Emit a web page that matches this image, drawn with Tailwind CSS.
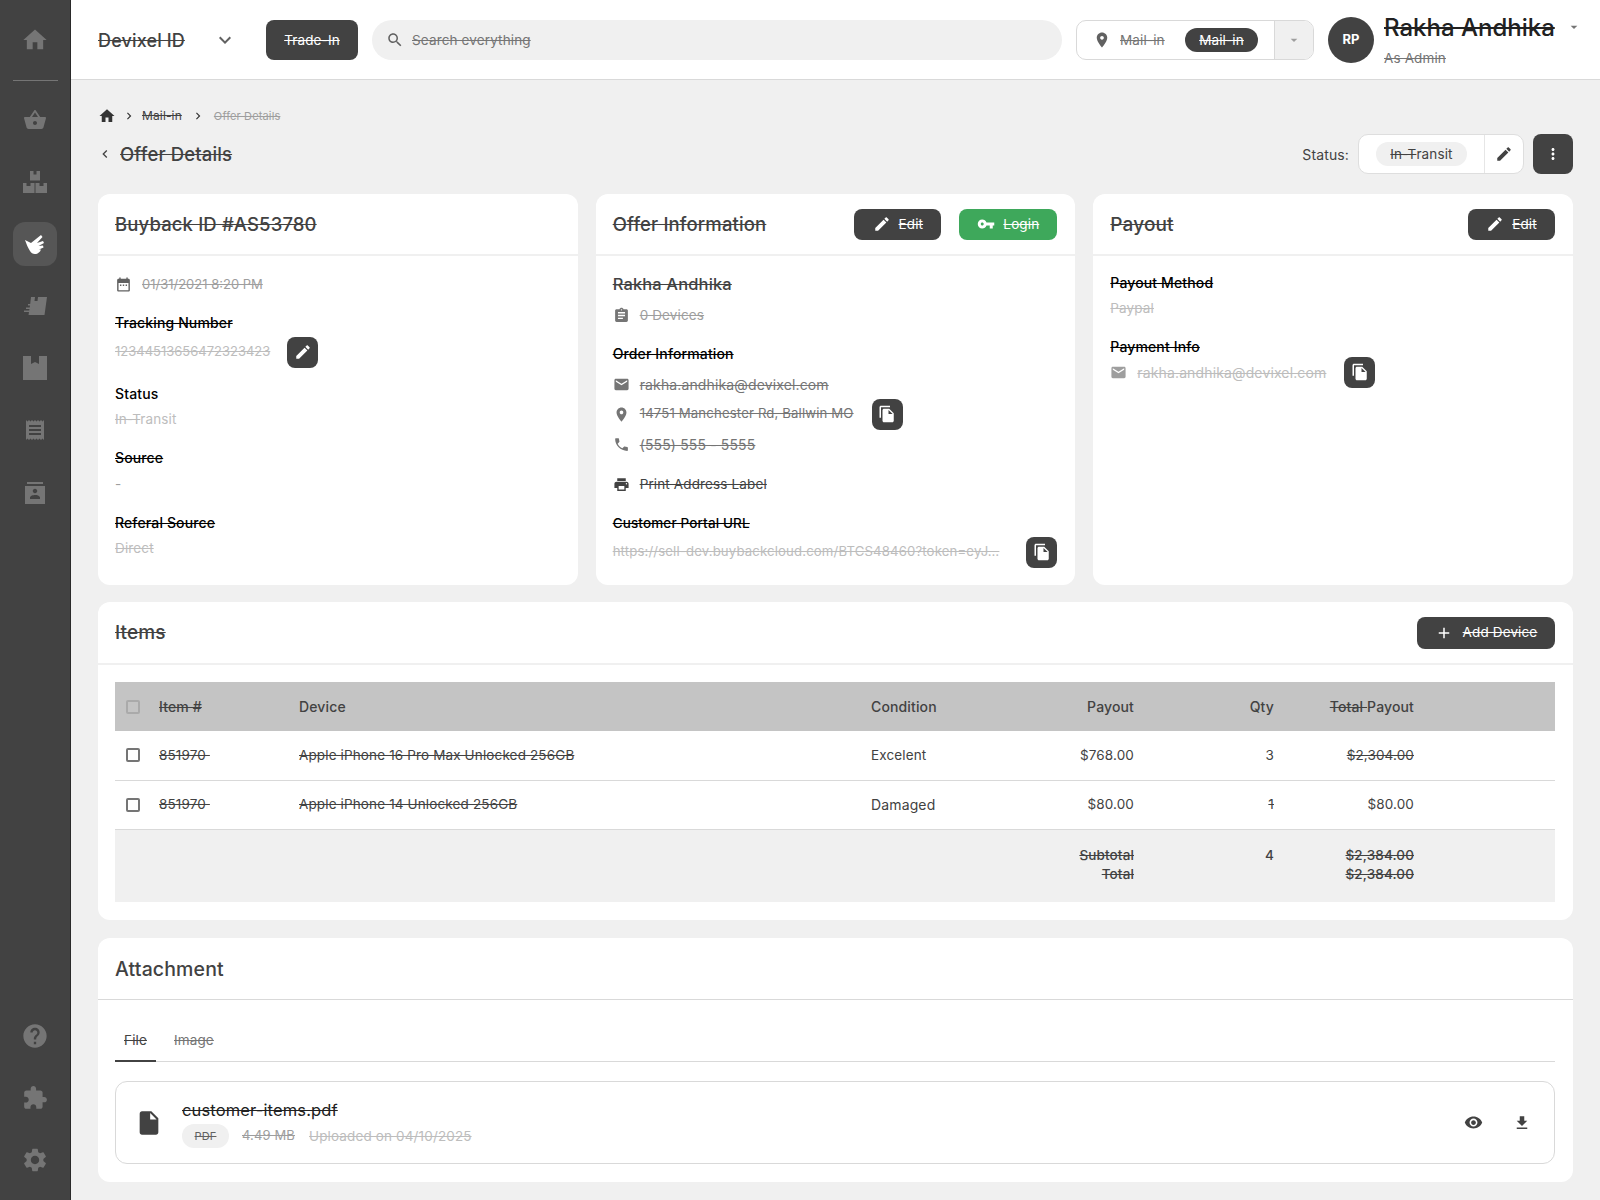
<!DOCTYPE html>
<html lang="en">
<head>
  <meta charset="UTF-8">
  <meta name="viewport" content="width=device-width, initial-scale=1.0">
  <title>Offer Details</title>
  <script src="https://cdn.jsdelivr.net/npm/@tailwindcss/browser@4"></script>
</head>
<body class="h-screen overflow-hidden flex bg-[#f0f0f0] font-['Inter','Liberation_Sans',sans-serif] text-[13.5px] tracking-[0.01em] text-[#424242]">

  <!-- sidebar -->
  <aside class="w-[71px] shrink-0 h-full bg-[#424242] border-r border-[#2a2a2a] flex flex-col items-center text-[#757575]">
    <div class="h-[80px] flex items-center">
      <svg class="w-7 h-7 fill-current" viewBox="0 0 24 24"><path d="M10 20v-6h4v6h5v-8h3L12 3 2 12h3v8z"/></svg>
    </div>
    <div class="w-[45px] border-t border-[#757575]"></div>
    <nav class="flex flex-col items-center gap-[18px] mt-[17px]">
      <div class="w-11 h-11 flex items-center justify-center"><svg class="w-6 h-6 fill-current" viewBox="0 0 24 24"><path d="M17.21 9l-4.38-6.56c-.19-.28-.51-.42-.83-.42-.32 0-.64.14-.83.43L6.79 9H2c-.55 0-1 .45-1 1 0 .09.01.18.04.27l2.54 9.27c.23.84 1 1.46 1.92 1.46h13c.92 0 1.69-.62 1.93-1.46l2.54-9.27L23 10c0-.55-.45-1-1-1h-4.79zM9 9l3-4.4L15 9H9zm3 8c-1.1 0-2-.9-2-2s.9-2 2-2 2 .9 2 2-.9 2-2 2z"/></svg></div>
      <div class="w-11 h-11 flex items-center justify-center"><svg class="w-6 h-6 fill-current" viewBox="0 0 24 24"><path d="M7 1h3.5v3.5h3V1H17v9.5H7zM0 13h3.5v3h4v-3h4v10H0zM12.500 13h4v3h4v-3H24v10H12.500z"/></svg></div>
      <div class="w-11 h-11 rounded-xl bg-[#565656] flex items-center justify-center text-white"><svg class="w-6 h-6 fill-current" viewBox="0 0 24 24"><path d="M2 8l6 3L18 3l1.500 2-5.500 6 6-2 1 2-5.500 3 4.500-.5.500 2-4.500 2h2l-1 2c-3 3.500-8 3.500-10 -.5C5 16 3.500 12 2 8z"/></svg></div>
      <div class="w-11 h-11 flex items-center justify-center"><svg class="w-6 h-6 fill-current" viewBox="0 0 24 24"><path d="M8 3h4l-.5 4h3L15 3h9l-2.500 18H5.500l.5-3H1v-1.500h5.200L6.500 15H3v-1.500h3.700L7 11.500H5V10h2.200z"/></svg></div>
      <div class="w-11 h-11 flex items-center justify-center"><svg class="w-6 h-6 fill-current" viewBox="0 0 24 24"><path d="M0 0h8v8l4-2 4 2V0h8v24H0z"/></svg></div>
      <div class="w-11 h-11 flex items-center justify-center"><svg class="w-6 h-6 fill-current" viewBox="0 0 24 24"><path d="M18 17H6v-2h12v2zm0-4H6v-2h12v2zm0-4H6V7h12v2zM3 22l1.500-1.500L6 22l1.500-1.500L9 22l1.500-1.500L12 22l1.500-1.500L15 22l1.500-1.500L18 22l1.500-1.500L21 22V2l-1.500 1.500L18 2l-1.500 1.500L15 2l-1.500 1.500L12 2l-1.500 1.500L9 2 7.500 3.500 6 2 4.500 3.500 3 2v20z"/></svg></div>
      <div class="w-11 h-11 flex items-center justify-center"><svg class="w-6 h-6 fill-current mt-[4px]" viewBox="0 0 24 24"><path d="M20 0H4v2h16V0zM22 4H2v18h20V4zm-10 2.750c1.240 0 2.250 1.010 2.250 2.250s-1.010 2.250-2.250 2.250S9.750 10.240 9.750 9 10.760 6.750 12 6.750zM17 17H7v-1.500c0-1.670 3.330-2.500 5-2.500s5 .83 5 2.500V17z"/></svg></div>
    </nav>
    <div class="mt-auto flex flex-col items-center gap-[18px] mb-[18px]">
      <div class="w-11 h-11 flex items-center justify-center"><svg class="w-7 h-7 fill-current" viewBox="0 0 24 24"><path d="M12 2C6.480 2 2 6.480 2 12s4.480 10 10 10 10-4.480 10-10S17.520 2 12 2zm1 17h-2v-2h2v2zm2.070-7.750l-.9.920C13.450 12.900 13 13.500 13 15h-2v-.5c0-1.100.45-2.100 1.170-2.830l1.240-1.260c.37-.36.59-.86.59-1.410 0-1.100-.9-2-2-2s-2 .9-2 2H8c0-2.210 1.790-4 4-4s4 1.790 4 4c0 .88-.36 1.680-.93 2.250z"/></svg></div>
      <div class="w-11 h-11 flex items-center justify-center"><svg class="w-[26px] h-[26px] fill-current" viewBox="0 0 24 24"><path d="M20.500 11H19V7c0-1.100-.9-2-2-2h-4V3.500C13 2.120 11.880 1 10.500 1S8 2.120 8 3.500V5H4c-1.100 0-1.990.9-1.990 2v3.800H3.500c1.490 0 2.700 1.210 2.700 2.700s-1.210 2.700-2.700 2.700H2V20c0 1.100.9 2 2 2h3.800v-1.500c0-1.490 1.210-2.700 2.700-2.700 1.490 0 2.700 1.210 2.700 2.700V22H17c1.100 0 2-.9 2-2v-4h1.500c1.380 0 2.500-1.120 2.500-2.500S21.880 11 20.500 11z"/></svg></div>
      <div class="w-11 h-11 flex items-center justify-center"><svg class="w-7 h-7 fill-current" viewBox="0 0 24 24"><path d="M19.140 12.940c.04-.3.06-.61.06-.94 0-.32-.02-.64-.07-.94l2.030-1.580c.18-.14.23-.41.12-.61l-1.920-3.320c-.12-.22-.37-.29-.59-.22l-2.390.96c-.5-.38-1.030-.7-1.620-.94l-.36-2.540c-.04-.24-.24-.41-.48-.41h-3.840c-.24 0-.43.17-.47.41l-.36 2.540c-.59.24-1.130.57-1.620.94l-2.390-.96c-.22-.08-.47 0-.59.22L2.740 8.870c-.12.21-.08.47.12.61l2.030 1.580c-.05.3-.09.63-.09.94s.02.64.07.94l-2.030 1.580c-.18.14-.23.41-.12.61l1.920 3.320c.12.22.37.29.59.22l2.390-.96c.5.38 1.030.7 1.620.94l.36 2.540c.05.24.24.41.48.41h3.840c.24 0 .44-.17.47-.41l.36-2.540c.59-.24 1.130-.56 1.620-.94l2.390.96c.22.08.47 0 .59-.22l1.920-3.320c.12-.22.07-.47-.12-.61l-2.010-1.580zM12 15.600c-1.980 0-3.600-1.620-3.600-3.600s1.620-3.600 3.600-3.600 3.600 1.620 3.600 3.600-1.620 3.600-3.600 3.600z"/></svg></div>
    </div>
  </aside>

  <div class="flex-1 min-w-0 flex flex-col">
    <!-- top bar -->
    <header class="h-[80px] shrink-0 bg-white border-b border-[#d9d9d9] flex items-center pl-[27px] gap-[14px]">
      <div class="w-[154px] shrink-0 flex items-center justify-between pr-[15px]">
        <span class="text-[18px] font-medium pt-[2px] line-through">Devixel ID</span>
        <svg class="w-6 h-6 fill-[#616161]" viewBox="0 0 24 24"><path d="M16.590 8.590L12 13.170 7.410 8.590 6 10l6 6 6-6z"/></svg>
      </div>
      <button class="w-[92px] h-10 pt-[1px] rounded-lg bg-[#424242] text-white line-through shrink-0">Trade-In</button>
      <div class="w-[690px] h-10 shrink-0 rounded-full bg-[#f0f0f0] flex items-center pl-[14px] gap-[8px] text-[#757575]">
        <svg class="w-[18px] h-[18px] fill-[#616161]" viewBox="0 0 24 24"><path d="M15.500 14h-.79l-.28-.27C15.410 12.590 16 11.110 16 9.500 16 5.910 13.090 3 9.500 3S3 5.910 3 9.500 5.910 16 9.500 16c1.610 0 3.090-.59 4.230-1.570l.27.28v.79l5 4.990L20.490 19l-4.990-5zm-6 0C7.010 14 5 11.990 5 9.500S7.010 5 9.500 5 14 7.010 14 9.500 11.990 14 9.500 14z"/></svg>
        <span class="pt-[1px] line-through">Search everything</span>
      </div>
      <div class="w-[238px] h-10 shrink-0 rounded-[10px] border border-[#d9d9d9] flex overflow-hidden">
        <div class="flex-1 flex items-center pl-[16px] text-[#757575]">
          <svg class="w-[18px] h-[18px] fill-[#616161] mr-[9px]" viewBox="0 0 24 24"><path d="M12 2C8.130 2 5 5.130 5 9c0 5.250 7 13 7 13s7-7.750 7-13c0-3.870-3.130-7-7-7zm0 9.500c-1.380 0-2.500-1.120-2.500-2.500s1.120-2.500 2.500-2.500 2.500 1.120 2.500 2.500-1.120 2.500-2.500 2.500z"/></svg>
          <span class="w-[47px] pt-[1px] line-through">Mail-in</span>
          <span class="ml-[18px] w-[73px] h-[24px] pt-[1px] rounded-full bg-[#424242] text-white line-through flex items-center justify-center">Mail-in</span>
        </div>
        <div class="w-[39px] bg-[#f0f0f0] border-l border-[#d9d9d9] flex items-center justify-center">
          <svg class="w-4 h-4 fill-[#9e9e9e]" viewBox="0 0 24 24"><path d="M7 10l5 5 5-5z"/></svg>
        </div>
      </div>
      <div class="w-[46px] h-[46px] shrink-0 rounded-full bg-[#424242] text-white text-[13px] font-bold flex items-center justify-center">RP</div>
      <div class="-ml-[4px] w-[172px] shrink-0 flex flex-col pt-[2px]">
        <span class="text-[24px] leading-[28px] font-medium text-[#212121] tracking-normal whitespace-nowrap line-through">Rakha Andhika</span>
        <span class="text-[13.5px] leading-[18px] mt-[7px] text-[#757575] line-through">As Admin</span>
      </div>
      <svg class="w-4 h-4 fill-[#757575] -ml-[4px] -mt-[26px]" viewBox="0 0 24 24"><path d="M7 10l5 5 5-5z"/></svg>
    </header>

    <main class="flex-1 min-h-0 pl-[27px] pr-[27px] pt-[26px] overflow-hidden">
      <!-- breadcrumb -->
      <div class="h-5 flex items-center text-[12px]">
        <svg class="w-[18px] h-[18px] fill-[#333]" viewBox="0 0 24 24"><path d="M10 20v-6h4v6h5v-8h3L12 3 2 12h3v8z"/></svg>
        <svg class="w-[14px] h-[14px] fill-[#333] mx-[6px]" viewBox="0 0 24 24"><path d="M10 6L8.590 7.410 13.170 12l-4.580 4.590L10 18l6-6z"/></svg>
        <span class="line-through">Mail-in</span>
        <svg class="w-[14px] h-[14px] fill-[#333] mx-[9px]" viewBox="0 0 24 24"><path d="M10 6L8.590 7.410 13.170 12l-4.580 4.590L10 18l6-6z"/></svg>
        <span class="text-[11px] text-[#9e9e9e] line-through">Offer Details</span>
      </div>

      <!-- page title -->
      <div class="h-10 mt-2 flex items-center">
        <svg class="w-4 h-4 fill-[#424242] -ml-[1px] mr-[7px]" viewBox="0 0 24 24"><path d="M15.410 7.410L14 6l-6 6 6 6 1.410-1.410L10.830 12z"/></svg>
        <h1 class="text-[18.500px] font-medium pt-[2px] line-through">Offer Details</h1>
        <span class="ml-auto mr-[9px] text-[14px]">Status:</span>
        <div class="w-[166px] h-10 bg-white rounded-[10px] border border-[#dedede] flex">
          <div class="flex-1 flex items-center justify-center">
            <span class="h-[24px] w-[91px] rounded-full bg-[#f0f0f0] flex items-center justify-center whitespace-pre"><span class="line-through">In-T</span>ransit</span>
          </div>
          <div class="w-[39px] border-l border-[#e6e6e6] flex items-center justify-center">
            <svg class="w-[18px] h-[18px] fill-[#424242]" viewBox="0 0 24 24"><path d="M3 17.250V21h3.750L17.810 9.940l-3.750-3.750L3 17.250zM20.710 7.040c.39-.39.39-1.020 0-1.410l-2.340-2.340c-.39-.39-1.020-.39-1.410 0l-1.830 1.830 3.750 3.750 1.830-1.830z"/></svg>
          </div>
        </div>
        <button class="ml-[9px] w-10 h-10 rounded-lg bg-[#424242] flex items-center justify-center">
          <svg class="w-[18px] h-[18px] fill-white" viewBox="0 0 24 24"><path d="M12 8c1.100 0 2-.9 2-2s-.9-2-2-2-2 .9-2 2 .9 2 2 2zm0 2c-1.100 0-2 .9-2 2s.9 2 2 2 2-.9 2-2-.9-2-2-2zm0 6c-1.100 0-2 .9-2 2s.9 2 2 2 2-.9 2-2-.9-2-2-2z"/></svg>
        </button>
      </div>

      <!-- three info cards -->
      <div class="grid grid-cols-3 gap-[18px] mt-5 h-[391px]">
        <section class="bg-white rounded-xl">
          <div class="h-[62px] pl-[17px] pr-[18px] flex items-center border-b-2 border-[#f0f0f0]">
            <h2 class="text-[18.500px] font-medium pt-[2px] line-through">Buyback ID #AS53780</h2>
          </div>
          <div class="pl-[17px] pr-[18px] pt-[18px]">
            <div class="h-5 flex items-center gap-[10px] text-[#9e9e9e]">
              <svg class="w-[17px] h-[17px] fill-[#616161]" viewBox="0 0 24 24"><path d="M19 4h-1V2h-2v2H8V2H6v2H5c-1.100 0-2 .9-2 2v14c0 1.100.9 2 2 2h14c1.100 0 2-.9 2-2V6c0-1.100-.9-2-2-2zm0 16H5V10h14v10zM7 12h2v2H7zm4 0h2v2h-2zm4 0h2v2h-2z"/></svg>
              <span class="text-[13px] tracking-normal pt-[1px] line-through">01/31/2021 8:20 PM</span>
            </div>
            <p class="mt-[19px] h-5 leading-5 text-[14px] font-medium text-black line-through">Tracking Number</p>
            <div class="mt-1 h-[30px] flex items-center text-[#bdbdbd]">
              <span class="w-[172px] text-[13px] tracking-normal line-through">12344513656472323423</span>
              <button class="w-[31px] h-[31px] rounded-lg bg-[#424242] flex items-center justify-center">
                <svg class="w-[18px] h-[18px] fill-white" viewBox="0 0 24 24"><path d="M3 17.250V21h3.750L17.810 9.940l-3.750-3.750L3 17.250zM20.710 7.040c.39-.39.39-1.020 0-1.410l-2.340-2.340c-.39-.39-1.020-.39-1.410 0l-1.830 1.830 3.750 3.750 1.830-1.830z"/></svg>
              </button>
            </div>
            <p class="mt-[17px] h-5 leading-5 text-[14px] font-medium text-black">Status</p>
            <p class="mt-[5px] h-5 leading-5 text-[#bdbdbd]"><span class="line-through">In-T</span>ransit</p>
            <p class="mt-[19px] h-5 leading-5 text-[14px] font-medium text-black line-through">Source</p>
            <p class="mt-[6px] h-5 leading-5 text-[#9e9e9e]">-</p>
            <p class="mt-[19px] h-5 leading-5 text-[14px] font-medium text-black line-through">Referal Source</p>
            <p class="mt-[5px] h-5 leading-5 text-[#bdbdbd] line-through">Direct</p>
          </div>
        </section>

        <section class="bg-white rounded-xl">
          <div class="h-[62px] pl-[17px] pr-[18px] flex items-center justify-between border-b-2 border-[#f0f0f0]">
            <h2 class="text-[18.500px] font-medium pt-[2px] line-through">Offer Information</h2>
            <div class="flex gap-[18px]">
              <button class="w-[87px] h-[31px] rounded-lg bg-[#424242] text-white line-through flex items-center justify-center gap-[8px]">
                <svg class="w-[18px] h-[18px] fill-white" viewBox="0 0 24 24"><path d="M3 17.250V21h3.750L17.810 9.940l-3.750-3.750L3 17.250zM20.710 7.040c.39-.39.39-1.020 0-1.410l-2.340-2.340c-.39-.39-1.020-.39-1.410 0l-1.830 1.830 3.750 3.750 1.830-1.830z"/></svg>
                Edit
              </button>
              <button class="w-[98px] h-[31px] rounded-lg bg-[#3ea85b] text-white line-through flex items-center justify-center gap-[8px]">
                <svg class="w-[18px] h-[18px] fill-white" viewBox="0 0 24 24"><path d="M12.650 10C11.830 7.670 9.610 6 7 6c-3.310 0-6 2.690-6 6s2.690 6 6 6c2.610 0 4.830-1.670 5.650-4H17v4h4v-4h2v-4H12.650zM7 14c-1.100 0-2-.9-2-2s.9-2 2-2 2 .9 2 2-.9 2-2 2z"/></svg>
                Login
              </button>
            </div>
          </div>
          <div class="pl-[17px] pr-[18px] pt-[18px]">
            <p class="h-5 leading-5 text-[16.500px] font-medium line-through">Rakha Andhika</p>
            <div class="mt-[11px] h-5 flex items-center gap-[10px] text-[#9e9e9e]">
              <svg class="w-[17px] h-[17px] fill-[#757575]" viewBox="0 0 24 24"><path d="M19 3h-4.180C14.400 1.840 13.300 1 12 1c-1.300 0-2.400.84-2.820 2H5c-1.100 0-2 .9-2 2v14c0 1.100.9 2 2 2h14c1.100 0 2-.9 2-2V5c0-1.100-.9-2-2-2zm-7 0c.55 0 1 .45 1 1s-.45 1-1 1-1-.45-1-1 .45-1 1-1zm2 14H7v-2h7v2zm3-4H7v-2h10v2zm0-4H7V7h10v2z"/></svg>
              <span class="line-through">0 Devices</span>
            </div>
            <p class="mt-[19px] h-5 leading-5 text-[14px] font-medium text-black line-through">Order Information</p>
            <div class="mt-[10px] h-5 flex items-center gap-[10px] text-[#757575]">
              <svg class="w-[17px] h-[17px] fill-[#757575]" viewBox="0 0 24 24"><path d="M20 4H4c-1.100 0-1.990.9-1.990 2L2 18c0 1.100.9 2 2 2h16c1.100 0 2-.9 2-2V6c0-1.100-.9-2-2-2zm0 4l-8 5-8-5V6l8 5 8-5v2z"/></svg>
              <span class="text-[14px] line-through">rakha.andhika@devixel.com</span>
            </div>
            <div class="mt-[10px] h-5 flex items-center gap-[10px] text-[#757575]">
              <svg class="w-[17px] h-[17px] fill-[#757575]" viewBox="0 0 24 24"><path d="M12 2C8.130 2 5 5.130 5 9c0 5.250 7 13 7 13s7-7.750 7-13c0-3.870-3.130-7-7-7zm0 9.500c-1.380 0-2.500-1.120-2.500-2.500s1.120-2.500 2.500-2.500 2.500 1.120 2.500 2.500-1.120 2.500-2.500 2.500z"/></svg>
              <span class="w-[214px] text-[13.200px] whitespace-nowrap line-through">14751 Manchester Rd, Ballwin MO</span>
              <button class="ml-[8px] w-[31px] h-[31px] rounded-lg bg-[#424242] flex items-center justify-center">
                <svg class="w-[18px] h-[18px] fill-white" viewBox="0 0 24 24"><path d="M16 1H4c-1.100 0-2 .9-2 2v14h2V3h12V1zm-1 4l6 6v10c0 1.100-.9 2-2 2H7.990C6.890 23 6 22.100 6 21l.01-14c0-1.100.89-2 1.990-2h7zm-1 7h5.500L14 6.500V12z"/></svg>
              </button>
            </div>
            <div class="mt-[10px] h-5 flex items-center gap-[10px] text-[#757575]">
              <svg class="w-[17px] h-[17px] fill-[#757575]" viewBox="0 0 24 24"><path d="M6.620 10.790c1.440 2.830 3.760 5.140 6.590 6.590l2.200-2.200c.27-.27.67-.36 1.020-.24 1.120.37 2.330.57 3.570.57.55 0 1 .45 1 1V20c0 .55-.45 1-1 1-9.390 0-17-7.610-17-17 0-.55.45-1 1-1h3.500c.55 0 1 .45 1 1 0 1.250.2 2.450.57 3.570.11.35.03.74-.25 1.020l-2.200 2.200z"/></svg>
              <span class="text-[14px] line-through">(555) 555 - 5555</span>
            </div>
            <div class="mt-[20px] h-5 flex items-center gap-[10px] text-[#424242]">
              <svg class="w-[17px] h-[17px] fill-[#424242]" viewBox="0 0 24 24"><path d="M19 8H5c-1.660 0-3 1.340-3 3v6h4v4h12v-4h4v-6c0-1.660-1.340-3-3-3zm-3 11H8v-5h8v5zm3-7c-.55 0-1-.45-1-1s.45-1 1-1 1 .45 1 1-.45 1-1 1zm-1-9H6v4h12V3z"/></svg>
              <span class="line-through">Print Address Label</span>
            </div>
            <p class="mt-[19px] h-5 leading-5 text-[13.500px] font-medium text-black line-through">Customer Portal URL</p>
            <div class="mt-[4px] h-[30px] flex items-center text-[#bdbdbd]">
              <span class="w-[405px] text-[13.200px] whitespace-nowrap mr-[21px] line-through">https://sell-dev.buybackcloud.com/BTCS48460?token=eyJ&hellip;</span>
              <button class="w-[31px] h-[31px] shrink-0 rounded-lg bg-[#424242] flex items-center justify-center">
                <svg class="w-[18px] h-[18px] fill-white" viewBox="0 0 24 24"><path d="M16 1H4c-1.100 0-2 .9-2 2v14h2V3h12V1zm-1 4l6 6v10c0 1.100-.9 2-2 2H7.990C6.890 23 6 22.100 6 21l.01-14c0-1.100.89-2 1.990-2h7zm-1 7h5.500L14 6.500V12z"/></svg>
              </button>
            </div>
          </div>
        </section>

        <section class="bg-white rounded-xl">
          <div class="h-[62px] pl-[17px] pr-[18px] flex items-center justify-between border-b-2 border-[#f0f0f0]">
            <h2 class="text-[19px] font-medium pt-[2px] line-through">Payout</h2>
            <button class="w-[87px] h-[31px] rounded-lg bg-[#424242] text-white line-through flex items-center justify-center gap-[8px]">
              <svg class="w-[18px] h-[18px] fill-white" viewBox="0 0 24 24"><path d="M3 17.250V21h3.750L17.810 9.940l-3.750-3.750L3 17.250zM20.710 7.040c.39-.39.39-1.020 0-1.410l-2.340-2.340c-.39-.39-1.020-.39-1.410 0l-1.830 1.830 3.750 3.750 1.830-1.830z"/></svg>
              Edit
            </button>
          </div>
          <div class="pl-[17px] pr-[18px] pt-[17px]">
            <p class="h-5 leading-5 text-[14px] font-medium text-black line-through">Payout Method</p>
            <p class="mt-[5px] h-5 leading-5 text-[#bdbdbd] line-through">Paypal</p>
            <p class="mt-[19px] h-5 leading-5 text-[14px] font-medium text-black line-through">Payment Info</p>
            <div class="h-[30px] flex items-center gap-[10px] text-[#bdbdbd]">
              <svg class="w-[17px] h-[17px] fill-[#9e9e9e]" viewBox="0 0 24 24"><path d="M20 4H4c-1.100 0-1.990.9-1.990 2L2 18c0 1.100.9 2 2 2h16c1.100 0 2-.9 2-2V6c0-1.100-.9-2-2-2zm0 4l-8 5-8-5V6l8 5 8-5v2z"/></svg>
              <span class="w-[189px] text-[14px] whitespace-nowrap line-through">rakha.andhika@devixel.com</span>
              <button class="ml-[8px] w-[31px] h-[31px] rounded-lg bg-[#424242] flex items-center justify-center">
                <svg class="w-[18px] h-[18px] fill-white" viewBox="0 0 24 24"><path d="M16 1H4c-1.100 0-2 .9-2 2v14h2V3h12V1zm-1 4l6 6v10c0 1.100-.9 2-2 2H7.990C6.890 23 6 22.100 6 21l.01-14c0-1.100.89-2 1.990-2h7zm-1 7h5.500L14 6.500V12z"/></svg>
              </button>
            </div>
          </div>
        </section>
      </div>

      <!-- items -->
      <section class="bg-white rounded-xl mt-[17px] h-[318px]">
        <div class="h-[63px] pl-[17px] pr-[18px] flex items-center justify-between border-b-2 border-[#f0f0f0]">
          <h2 class="text-[19px] font-medium pt-[2px] line-through">Items</h2>
          <button class="w-[138px] h-[32px] rounded-lg bg-[#424242] text-white line-through flex items-center justify-center gap-[10px]">
            <svg class="w-[18px] h-[18px] fill-white" viewBox="0 0 24 24"><path d="M19 13h-6v6h-2v-6H5v-2h6V5h2v6h6v2z"/></svg>
            Add Device
          </button>
        </div>
        <div class="pl-[17px] pr-[18px] pt-[17px]">
          <table class="w-full table-fixed border-collapse">
            <colgroup>
              <col class="w-[44px]"><col class="w-[140px]"><col class="w-[572px]"><col class="w-[120px]"><col class="w-[143px]"><col class="w-[140px]"><col class="w-[140px]"><col>
            </colgroup>
            <thead>
              <tr class="h-[49px] bg-[#c4c4c4] text-[14px]">
                <th class="text-left font-medium pl-[11px]"><span class="block w-[14px] h-[14px] rounded-[2px] border-2 border-[#aaaaaa]"></span></th>
                <th class="text-left font-medium line-through">Item #</th>
                <th class="text-left font-medium">Device</th>
                <th class="text-left font-medium">Condition</th>
                <th class="text-right font-medium">Payout</th>
                <th class="text-right font-medium">Qty</th>
                <th class="text-right font-medium"><span class="line-through">Total </span>Payout</th>
                <th></th>
              </tr>
            </thead>
            <tbody>
              <tr class="h-[49px] border-b border-[#d9d9d9]">
                <td class="pl-[11px]"><span class="block w-[14px] h-[14px] rounded-[2px] border-2 border-[#757575]"></span></td>
                <td class="line-through">851970&nbsp;</td>
                <td class="line-through">Apple iPhone 16 Pro Max Unlocked 256GB</td>
                <td>Excelent</td>
                <td class="text-right">$768.00</td>
                <td class="text-right">3</td>
                <td class="text-right line-through">$2,304.00</td>
                <td></td>
              </tr>
              <tr class="h-[49px] border-b border-[#d9d9d9]">
                <td class="pl-[11px]"><span class="block w-[14px] h-[14px] rounded-[2px] border-2 border-[#757575]"></span></td>
                <td class="line-through">851970&nbsp;</td>
                <td class="line-through">Apple iPhone 14 Unlocked 256GB</td>
                <td class="text-[14px]">Damaged</td>
                <td class="text-right">$80.00</td>
                <td class="text-right line-through">1</td>
                <td class="text-right">$80.00</td>
                <td></td>
              </tr>
            </tbody>
            <tfoot>
              <tr class="h-[73px] bg-[#f0f0f0] font-medium align-top">
                <td colspan="4"></td>
                <td class="text-right pt-[16px] leading-[19px] line-through">Subtotal<br>Total</td>
                <td class="text-right pt-[16px] leading-[19px]">4</td>
                <td class="text-right pt-[16px] leading-[19px] line-through">$2,384.00<br>$2,384.00</td>
                <td></td>
              </tr>
            </tfoot>
          </table>
        </div>
      </section>

      <!-- attachment -->
      <section class="bg-white rounded-xl mt-[18px] h-[244px]">
        <div class="h-[62px] pl-[17px] pr-[18px] flex items-center border-b border-[#d9d9d9]">
          <h2 class="text-[19.500px] font-medium pt-[2px]">Attachment</h2>
        </div>
        <div class="pl-[17px] pr-[18px] pt-[18px]">
          <div class="h-[44px] flex border-b border-[#d9d9d9]">
            <span class="w-[41px] h-[44px] text-center leading-[44px] border-b-2 border-[#424242] line-through">File</span>
            <span class="ml-[18px] leading-[44px] text-[#757575] line-through">Image</span>
          </div>
          <div class="mt-[19px] h-[83px] rounded-xl border border-[#d9d9d9] flex items-center pl-[20px] pr-[23px]">
            <svg class="w-[28px] h-[28px] fill-[#424242] -ml-[1px]" viewBox="0 0 24 24"><path d="M6 2c-1.100 0-1.990.9-1.990 2L4 20c0 1.100.89 2 1.990 2H18c1.100 0 2-.9 2-2V8l-6-6H6zm7 7V3.500L18.500 9H13z"/></svg>
            <div class="ml-[19px] pt-[2px]">
              <p class="text-[16.500px] leading-[22px] text-[#212121] line-through">customer-items.pdf</p>
              <div class="mt-[3px] flex items-center text-[13.500px] text-[#bdbdbd]">
                <span class="w-[47px] h-[24px] rounded-full bg-[#f0f0f0] text-[#616161] text-[11px] flex items-center justify-center line-through">PDF</span>
                <span class="ml-[13px] text-[13px] text-[#9e9e9e] line-through">4.49 MB</span>
                <span class="ml-[14px] line-through">Uploaded on 04/10/2025</span>
              </div>
            </div>
            <svg class="ml-auto w-[19px] h-[19px] fill-[#424242]" viewBox="0 0 24 24"><path d="M12 4.500C7 4.500 2.730 7.610 1 12c1.730 4.390 6 7.500 11 7.500s9.270-3.110 11-7.500c-1.730-4.390-6-7.500-11-7.500zM12 17c-2.760 0-5-2.240-5-5s2.240-5 5-5 5 2.240 5 5-2.240 5-5 5zm0-8c-1.660 0-3 1.340-3 3s1.340 3 3 3 3-1.340 3-3-1.340-3-3-3z"/></svg>
            <svg class="ml-[30px] w-[18px] h-[18px] fill-[#424242]" viewBox="0 0 24 24"><path d="M19 9h-4V3H9v6H5l7 7 7-7zM5 18v2h14v-2H5z"/></svg>
          </div>
        </div>
      </section>
    </main>
  </div>
</body>
</html>
